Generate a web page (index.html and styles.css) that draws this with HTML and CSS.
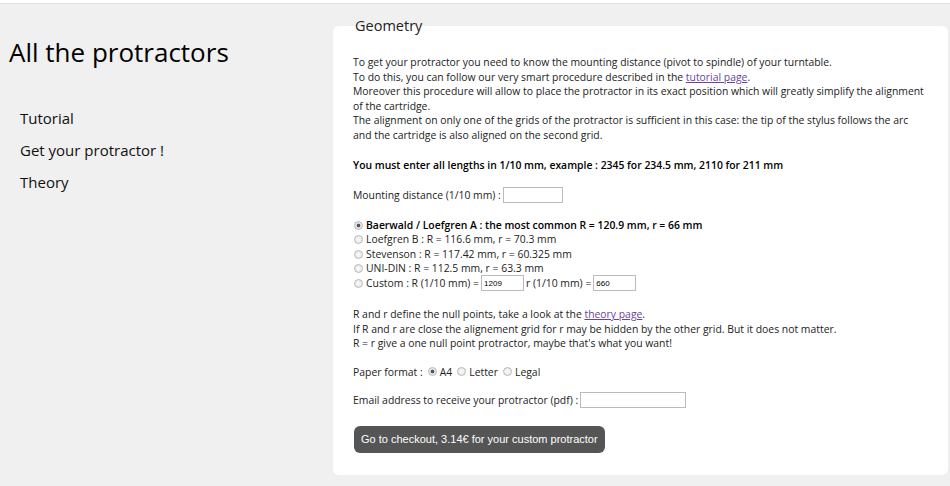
FILE: index.html
```html
<!DOCTYPE html>
<html>
<head>
<meta charset="utf-8">
<link rel="stylesheet" href="styles.css">
</head>
<body>
<div class="topbar"></div>
<div class="page">
  <aside class="sidebar">
    <h1 class="title">All the protractors</h1>
    <nav class="nav">
      <a class="nav-item">Tutorial</a>
      <a class="nav-item">Get your protractor !</a>
      <a class="nav-item">Theory</a>
    </nav>
  </aside>
  <main class="main">
    <fieldset class="card">
      <legend class="legend">Geometry</legend>
      <p class="intro">To get your protractor you need to know the mounting distance (pivot to spindle) of your turntable.<br>
      To do this, you can follow our very smart procedure described in the <a class="link" href="#">tutorial page</a>.<br>
      Moreover this procedure will allow to place the protractor in its exact position which will greatly simplify the alignment of the cartridge.<br>
      The alignment on only one of the grids of the protractor is sufficient in this case: the tip of the stylus follows the arc and the cartridge is also aligned on the second grid.</p>
      <p class="bold">You must enter all lengths in 1/10 mm, example : 2345 for 234.5 mm, 2110 for 211 mm</p>
      <p class="row row-mount">Mounting distance (1/10 mm) : <input class="field field-md" type="text"></p>
      <div class="radios">
        <label class="radio-row strong"><input class="radio" type="radio" name="g" checked>Baerwald / Loefgren A : the most common R = 120.9 mm, r = 66 mm</label>
        <label class="radio-row"><input class="radio" type="radio" name="g">Loefgren B : R = 116.6 mm, r = 70.3 mm</label>
        <label class="radio-row"><input class="radio" type="radio" name="g">Stevenson : R = 117.42 mm, r = 60.325 mm</label>
        <label class="radio-row"><input class="radio" type="radio" name="g">UNI-DIN : R = 112.5 mm, r = 63.3 mm</label>
        <label class="radio-row"><input class="radio" type="radio" name="g">Custom : R (1/10 mm) = <input class="field field-sm" type="text" value="1209"> r (1/10 mm) = <input class="field field-sm" type="text" value="660"></label>
      </div>
      <p class="para">R and r define the null points, take a look at the <a class="link" href="#">theory page</a>.<br>
      If R and r are close the alignement grid for r may be hidden by the other grid. But it does not matter.<br>
      R = r give a one null point protractor, maybe that's what you want!</p>
      <p class="row row-paper">Paper format : <label class="inline"><input class="radio" type="radio" name="p" checked>A4</label><label class="inline"><input class="radio" type="radio" name="p">Letter</label><label class="inline"><input class="radio" type="radio" name="p">Legal</label></p>
      <p class="row row-email">Email address to receive your protractor (pdf) : <input class="field field-lg" type="text"></p>
      <button class="checkout">Go to checkout, 3.14€ for your custom protractor</button>
    </fieldset>
  </main>
</div>
</body>
</html>
```

FILE: styles.css
```css
html, body {
  margin: 0;
  padding: 0;
}
body {
  background: #f0f0f0;
  font-family: "Open Sans", "Liberation Sans", sans-serif;
  color: #222;
  height: 486px;
  overflow: hidden;
}
.topbar {
  height: 3px;
  background: #fff;
  border-bottom: 1px solid #e3e3e3;
}
.page {
  display: flex;
  align-items: flex-start;
}
.sidebar {
  width: 333px;
  flex: none;
}
.title {
  margin: 30px 0 0 9px;
  font-size: 26px;
  font-weight: 400;
  color: #000;
  line-height: 36px;
}
.nav {
  display: flex;
  flex-direction: column;
  margin: 37px 0 0 20px;
  gap: 10px;
}
.nav-item {
  font-size: 15px;
  line-height: 22px;
  color: #111;
}
.main {
  flex: 1;
  margin-right: 2px;
  padding-top: 12px;
}
.card {
  margin: 0;
  border: none;
  background: #fff;
  border-radius: 6px;
  padding: 2px 21px 22px 20px;
  font-size: 10.4px;
  line-height: 14.6px;
  color: #222;
}
.legend {
  font-size: 14.5px;
  color: #222;
  padding: 0 2px;
  line-height: 20px;
}
.intro, .bold, .row, .para {
  margin: 0;
}
.intro {
  margin-top: 17px;
}
.bold {
  font-weight: 600;
  margin-top: 15.4px;
  color: #000;
}
.row {
  display: flex;
  align-items: center;
  min-height: 16px;
}
.row-mount {
  margin-top: 14.7px;
}
.radios {
  margin-top: 14.7px;
  display: flex;
  flex-direction: column;
}
.radio-row {
  display: flex;
  align-items: center;
  height: 14.5px;
}
.strong {
  font-weight: 600;
  color: #000;
}
.radio {
  -webkit-appearance: none;
  appearance: none;
  width: 9px;
  height: 9px;
  margin: 0 3px 0 1px;
  border: 1px solid #b8b8b8;
  border-radius: 50%;
  background: radial-gradient(circle, #fafafa 0, #e4e4e4 100%);
  box-sizing: border-box;
  flex: none;
}
.radio:checked {
  background: radial-gradient(circle, #555 0, #555 1.6px, #e8e8e8 2.2px, #e4e4e4 100%);
}
.inline {
  display: inline-flex;
  align-items: center;
  margin-left: 4px;
}
.field {
  border: 1px solid #bbb;
  height: 16px;
  box-sizing: border-box;
  padding: 0 2px;
  font-family: "Liberation Sans", sans-serif;
  font-size: 8px;
  margin-left: 2px;
}
.field-md { width: 60px; }
.field-sm { width: 43px; margin-right: 2px; }
.field-lg { width: 106px; }
.para {
  margin-top: 16.5px;
}
.row-paper {
  margin-top: 13.2px;
}
.row-email {
  margin-top: 12px;
}
.link {
  color: #6b3fa0;
}
.checkout {
  margin-top: 18px;
  margin-left: 1px;
  background: #555;
  color: #fff;
  border: none;
  border-radius: 6px;
  font-family: "Liberation Sans", sans-serif;
  font-size: 11px;
  padding: 0 7px;
  height: 27px;
}
```
